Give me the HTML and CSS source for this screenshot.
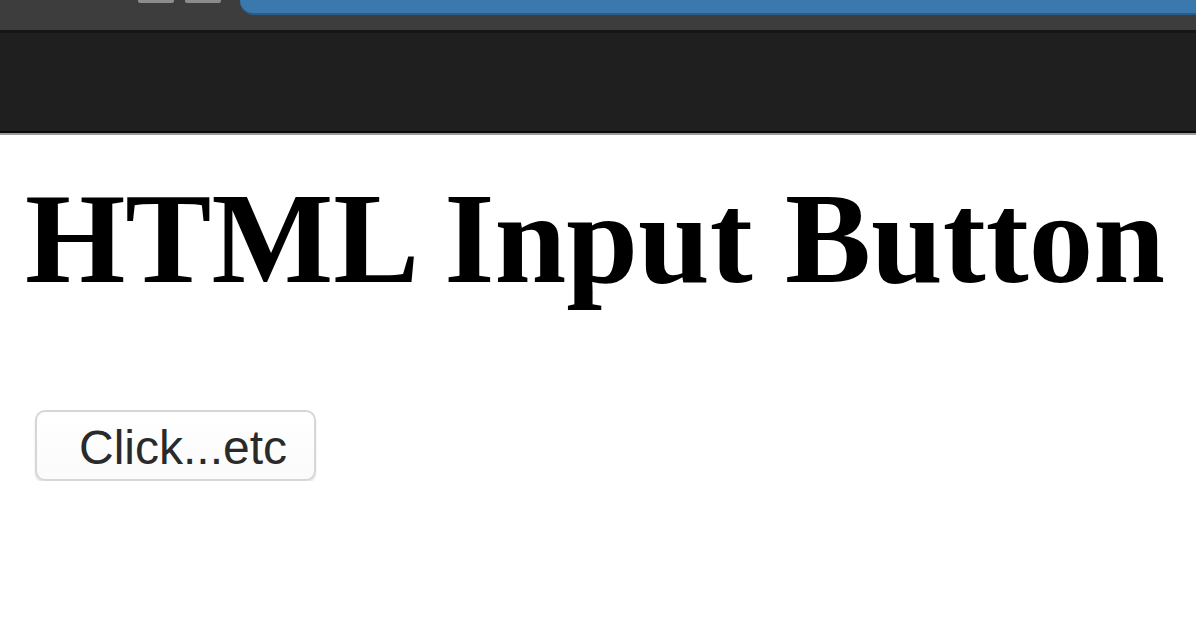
FILE: index.html
```html
<!DOCTYPE html>
<html>
<head>
<meta charset="utf-8">
<link rel="stylesheet" href="styles.css">
</head>
<body>
<div class="chrome">
  <div class="tabs">
    <span class="nub"></span>
    <span class="nub nub2"></span>
    <span class="active-tab"></span>
  </div>
</div>
<div class="toolbar"></div>
<main class="page">
  <h1 class="title">HTML Input Button</h1>
  <input class="btn" type="button" value="Click...etc">
</main>
</body>
</html>
```
FILE: styles.css
```css
html, body {
  margin: 0;
  padding: 0;
  background: #ffffff;
}
.chrome {
  height: 30px;
  background: #3d3d3d;
  border-bottom: 3px solid #161616;
  overflow: hidden;
}
.tabs {
  display: flex;
  align-items: flex-start;
  padding-left: 138px;
}
.nub {
  width: 36px;
  height: 3px;
  background: #8c8c8c;
  border-radius: 0 0 2px 2px;
}
.nub2 {
  margin-left: 11px;
}
.active-tab {
  flex: 1;
  margin-left: 19px;
  height: 13px;
  background: #3a78ae;
  border-bottom: 2px solid #2c5b85;
  border-bottom-left-radius: 14px;
}
.toolbar {
  height: 98px;
  background: #1f1f1f;
  border-bottom: 2px solid #0b0b0b;
  box-shadow: 0 2px 0 #9a9a9a;
}
.page {
  display: flex;
  flex-direction: column;
  align-items: flex-start;
  padding: 32px 0 0 25px;
}
.title {
  margin: 0;
  font-family: "Liberation Serif", "Times New Roman", serif;
  font-weight: bold;
  font-size: 129px;
  line-height: 148px;
  color: #000;
  white-space: nowrap;
}
.btn {
  margin: 97px 0 0 10px;
  width: 281px;
  height: 71px;
  padding: 4px 26px 0 42px;
  box-sizing: border-box;
  font-family: "Liberation Sans", Arial, sans-serif;
  font-size: 48px;
  color: #2a2a2a;
  text-align: left;
  background: linear-gradient(#ffffff, #fbfbfb);
  border: 2px solid #d6d6d6;
  border-radius: 10px;
  box-shadow: 0 2px 2px rgba(0,0,0,0.12);
}
```
